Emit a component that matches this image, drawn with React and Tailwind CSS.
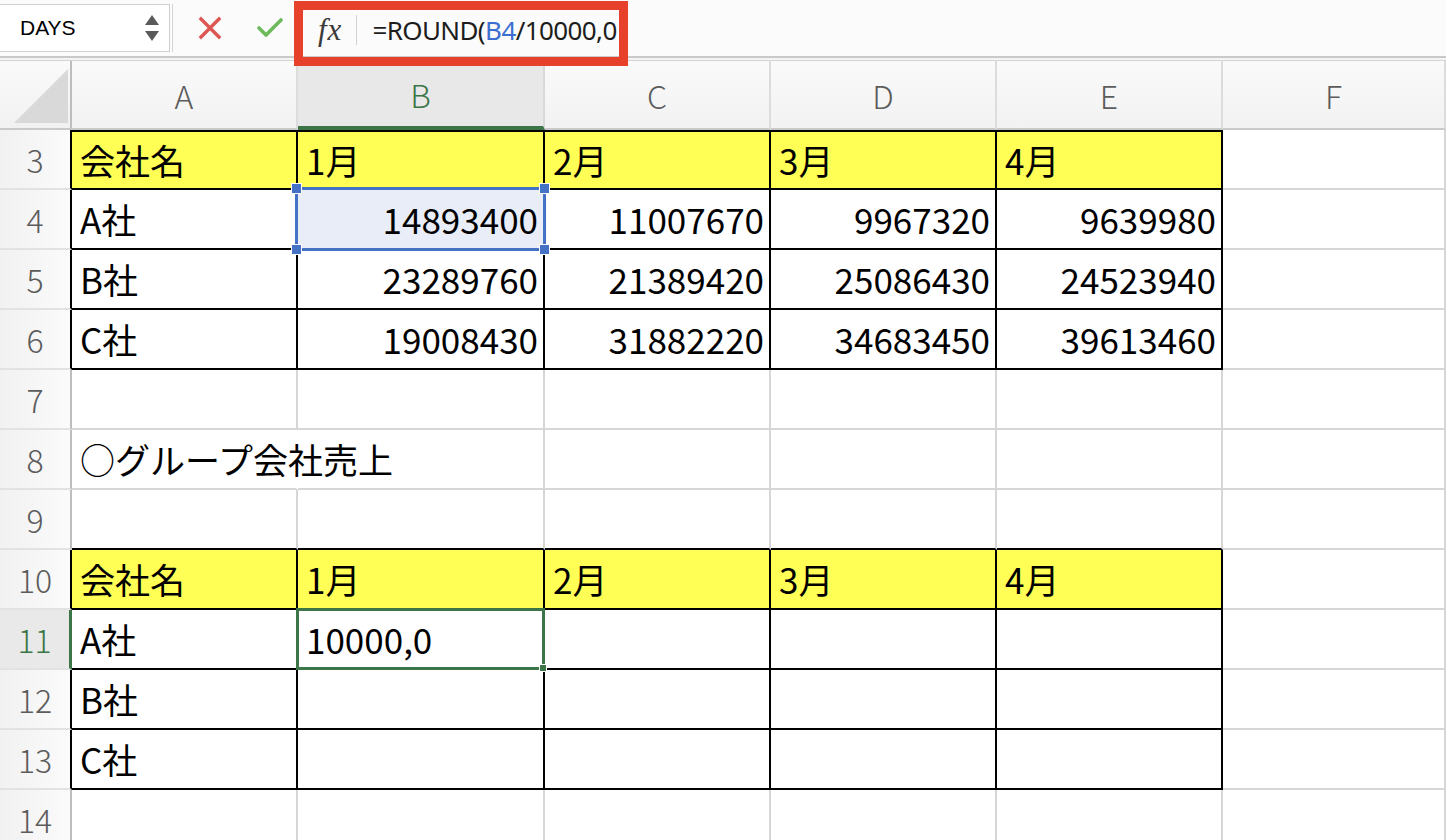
import React from 'react'

const cols = ['A', 'B', 'C', 'D', 'E', 'F']

const data = {
  3: ['会社名', '1月', '2月', '3月', '4月', ''],
  4: ['A社', '14893400', '11007670', '9967320', '9639980', ''],
  5: ['B社', '23289760', '21389420', '25086430', '24523940', ''],
  6: ['C社', '19008430', '31882220', '34683450', '39613460', ''],
  8: ['○グループ会社売上', '', '', '', '', ''],
  10: ['会社名', '1月', '2月', '3月', '4月', ''],
  11: ['A社', '', '', '', '', ''],
  12: ['B社', '', '', '', '', ''],
  13: ['C社', '', '', '', '', ''],
}

const rows = [3, 4, 5, 6, 7, 8, 9, 10, 11, 12, 13, 14]

const inTable = (r, c) => ((r >= 3 && r <= 6) || (r >= 10 && r <= 13)) && c >= 0 && c <= 4
const isYellow = (r, c) => (r === 3 || r === 10) && c <= 4

const RowHeader = ({ r }) => {
  const active = r === 11
  const right = active
    ? 'border-r-[3px] border-r-[#3b7548]'
    : inTable(r, 0)
    ? 'border-r-2 border-r-black'
    : 'border-r-2 border-r-[#bdbdbd]'
  return (
    <div
      className={`flex items-center justify-center border-b-2 border-b-[#e2e2e2] ${right} ${
        active ? 'bg-[#e9e9e9] text-[#3b7548]' : 'bg-gradient-to-r from-[#f1f1f1] to-[#fbfbfb] text-[#5c5c5c]'
      } text-[32px] font-light`}
    >
      {r}
    </div>
  )
}

const Cell = ({ r, c }) => {
  const text = data[r] ? data[r][c] : ''
  const numeric = /^\d+$/.test(text)
  const right =
    r === 8 && c === 0 ? 'border-r-white' : inTable(r, c) ? 'border-r-black' : 'border-r-[#d6d6d6]'
  const bottom = inTable(r, c) || inTable(r + 1, c) ? 'border-b-black' : 'border-b-[#d6d6d6]'
  const top = r === 3 && c <= 4 ? 'border-t-2 border-t-black' : ''
  const bg = isYellow(r, c) ? 'bg-[#ffff55]' : r === 4 && c === 1 ? 'bg-[#e8edf8]' : ''
  const selected = r === 4 && c === 1
  const editing = r === 11 && c === 1
  return (
    <div
      className={`relative flex items-center whitespace-nowrap border-r-2 border-b-2 ${right} ${bottom} ${top} ${bg} ${
        numeric ? 'justify-end pr-[5px]' : 'justify-start pl-[8px]'
      } text-[35px] text-black`}
    >
      {editing ? '10000,0' : text}
      {selected && (
        <div className="absolute -left-[3px] -top-[3px] -right-[3px] -bottom-[3px] border-[3px] border-[#4472c4] z-10">
          <span className="absolute -left-[7px] -top-[7px] w-[11px] h-[11px] bg-[#4472c4] border border-white" />
          <span className="absolute -right-[7px] -top-[7px] w-[11px] h-[11px] bg-[#4472c4] border border-white" />
          <span className="absolute -left-[7px] -bottom-[7px] w-[11px] h-[11px] bg-[#4472c4] border border-white" />
          <span className="absolute -right-[7px] -bottom-[7px] w-[11px] h-[11px] bg-[#4472c4] border border-white" />
        </div>
      )}
      {editing && (
        <div className="absolute -left-[2px] -top-[2px] -right-[2px] -bottom-[2px] border-[3px] border-[#3b7548] z-10">
          <span className="absolute -right-[5px] -bottom-[5px] w-[8px] h-[8px] bg-[#3b7548] border border-white" />
        </div>
      )}
    </div>
  )
}

const App = () => {
  return (
    <div className="relative w-[1446px] h-[840px] overflow-hidden bg-white font-['Noto_Sans_CJK_JP','Noto_Sans',sans-serif]">
      {/* toolbar */}
      <div className="flex items-center h-[58px] bg-[#fbfbfb] border-b-2 border-[#c9c9c9]">
        <div className="flex items-center justify-between w-[170px] h-[48px] bg-white border border-l-0 border-[#cfcfcf] pl-[20px] pr-[10px]">
          <span className="text-[21px] text-black font-['Liberation_Sans',sans-serif]">DAYS</span>
          <div className="flex flex-col items-center gap-[6px] text-[#5a5a5a]">
            <svg width="14" height="10" viewBox="0 0 14 10"><polygon points="7,0 14,10 0,10" fill="currentColor" /></svg>
            <svg width="14" height="10" viewBox="0 0 14 10"><polygon points="0,0 14,0 7,10" fill="currentColor" /></svg>
          </div>
        </div>
        <div className="w-[6px] h-[48px] border-l border-[#d6d6d6] ml-[2px]" />
        <div className="flex items-center gap-[34px] ml-[20px]">
          <svg width="24" height="24" viewBox="0 0 24 24" fill="none" stroke="#dc5752" strokeWidth="3.4" strokeLinecap="square">
            <path d="M3 3 L21 21 M21 3 L3 21" />
          </svg>
          <svg width="28" height="22" viewBox="0 0 28 22" fill="none" stroke="#6cba5b" strokeWidth="3.6" strokeLinecap="round" strokeLinejoin="round">
            <path d="M3 11 L10 18 L25 3" />
          </svg>
        </div>
        <div className="flex items-center ml-[34px] mt-[4px]">
          <span className="text-[31px] italic text-[#3a3a3a] font-['Liberation_Serif',serif] tracking-[1px]">fx</span>
          <div className="w-px h-[30px] bg-[#d2d2d2] ml-[14px]" />
          <span className="ml-[15px] text-[26px] text-[#1d1d1d] font-['Noto_Sans',sans-serif] tracking-[-0.6px]">
            =ROUND(<span className="text-[#3c6fd0]">B4</span>/10000,0
          </span>
        </div>
      </div>
      <div className="h-[2px] bg-[#f4f4f4]" />

      {/* sheet */}
      <div className="grid grid-cols-[72px_226px_247px_226px_226px_226px_1fr] grid-rows-[69px_repeat(12,60px)] border-t border-[#d4d4d4]">
        <div className="relative border-r-2 border-b-2 border-r-[#bdbdbd] border-b-[#c9c9c9] bg-gradient-to-b from-[#fafafa] to-[#f1f1f1]">
          <svg className="absolute left-[14px] top-[8px]" width="54" height="54" viewBox="0 0 54 54">
            <polygon points="0,54 54,54 54,0" fill="#d9d9d9" />
          </svg>
        </div>
        {cols.map((col, i) => (
          <div
            key={col}
            className={`flex items-center justify-center text-[32px] font-light ${
              i === 1
                ? 'bg-[#e8e8e8] text-[#3b7548] border-b-4 border-b-[#3b7548] border-r-2 border-r-[#d8d8d8]'
                : 'bg-gradient-to-b from-[#fafafa] to-[#f2f2f2] text-[#5c5c5c] border-b-2 border-b-[#c9c9c9] border-r-2 border-r-[#dcdcdc]'
            }`}
          >
            {col}
          </div>
        ))}
        {rows.map((r) => (
          <React.Fragment key={r}>
            <RowHeader r={r} />
            {cols.map((col, c) => (
              <Cell key={col} r={r} c={c} />
            ))}
          </React.Fragment>
        ))}
      </div>

      {/* annotation */}
      <div className="absolute left-[294px] top-[1px] w-[334px] h-[65px] border-[9px] border-[#e8412b]" />
    </div>
  )
}

export default App
